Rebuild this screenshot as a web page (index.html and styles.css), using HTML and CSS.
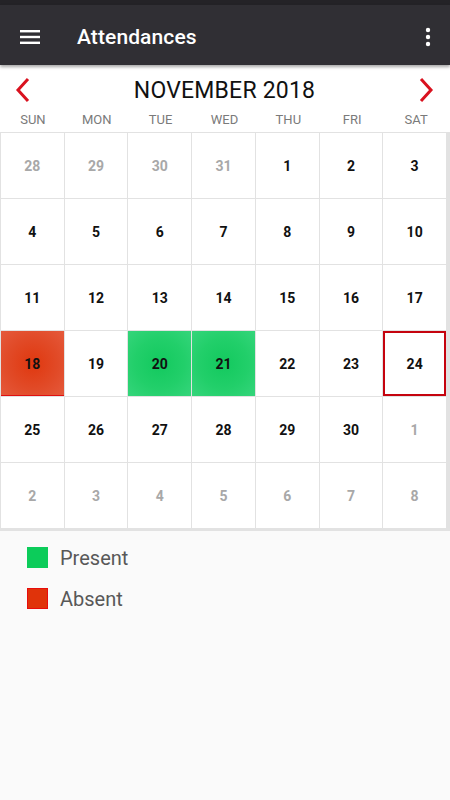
FILE: index.html
```html
<!DOCTYPE html>
<html>
<head>
<meta charset="utf-8">
<link rel="stylesheet" href="styles.css">
</head>
<body>
<div class="statusbar"></div>
<header class="toolbar">
  <svg class="menu" width="20" height="16" viewBox="0 0 20 16"><rect x="0" y="1" width="20" height="2.4" fill="#fff"/><rect x="0" y="6.8" width="20" height="2.4" fill="#fff"/><rect x="0" y="12.6" width="20" height="2.4" fill="#fff"/></svg>
  <h1 class="title">Attendances</h1>
  <svg class="kebab" width="6" height="20" viewBox="0 0 6 20"><circle cx="3" cy="3" r="2.2" fill="#fff"/><circle cx="3" cy="10" r="2.2" fill="#fff"/><circle cx="3" cy="17" r="2.2" fill="#fff"/></svg>
</header>
<section class="calendar">
  <div class="month-row">
    <svg class="arrow" width="16" height="26" viewBox="0 0 16 26"><path d="M13 2 L3 13 L13 24" fill="none" stroke="#d9121f" stroke-width="3"/></svg>
    <div class="month">NOVEMBER 2018</div>
    <svg class="arrow" width="16" height="26" viewBox="0 0 16 26"><path d="M3 2 L13 13 L3 24" fill="none" stroke="#d9121f" stroke-width="3"/></svg>
  </div>
  <div class="weekdays">
    <span>SUN</span><span>MON</span><span>TUE</span><span>WED</span><span>THU</span><span>FRI</span><span>SAT</span>
  </div>
  <div class="grid">
    <div class="cell muted">28</div><div class="cell muted">29</div><div class="cell muted">30</div><div class="cell muted">31</div><div class="cell">1</div><div class="cell">2</div><div class="cell">3</div>
    <div class="cell">4</div><div class="cell">5</div><div class="cell">6</div><div class="cell">7</div><div class="cell">8</div><div class="cell">9</div><div class="cell">10</div>
    <div class="cell">11</div><div class="cell">12</div><div class="cell">13</div><div class="cell">14</div><div class="cell">15</div><div class="cell">16</div><div class="cell">17</div>
    <div class="cell absent">18</div><div class="cell">19</div><div class="cell present">20</div><div class="cell present">21</div><div class="cell">22</div><div class="cell">23</div><div class="cell today">24</div>
    <div class="cell">25</div><div class="cell">26</div><div class="cell">27</div><div class="cell">28</div><div class="cell">29</div><div class="cell">30</div><div class="cell muted">1</div>
    <div class="cell muted">2</div><div class="cell muted">3</div><div class="cell muted">4</div><div class="cell muted">5</div><div class="cell muted">6</div><div class="cell muted">7</div><div class="cell muted">8</div>
  </div>
</section>
<ul class="legend">
  <li><span class="swatch swatch-present"></span>Present</li>
  <li><span class="swatch swatch-absent"></span>Absent</li>
</ul>
</body>
</html>
```
FILE: styles.css
```css
html, body {
  margin: 0;
  padding: 0;
  background: #fafafa;
  font-family: Roboto, "Liberation Sans", sans-serif;
  width: 450px;
  height: 800px;
  overflow: hidden;
}
.statusbar {
  height: 5px;
  background: #242327;
}
.toolbar {
  height: 60px;
  box-sizing: border-box;
  padding: 3px 20px 0;
  background: #302f34;
  display: flex;
  align-items: center;
  box-shadow: 0 2px 3px rgba(0,0,0,0.35);
  position: relative;
  z-index: 1;
}
.menu {
  display: block;
}
.title {
  margin: 0 0 0 37px;
  font-size: 21px;
  font-weight: 500;
  color: #fff;
  flex: 1;
  letter-spacing: 0.1px;
}
.kebab {
  display: block;
  margin-right: -1px;
}
.calendar {
  background: #fff;
}
.month-row {
  height: 47px;
  padding: 1px 16px 0 15px;
  display: flex;
  align-items: center;
  justify-content: space-between;
}
.arrow {
  display: block;
}
.month {
  font-size: 23px;
  color: #111;
  letter-spacing: 0.2px;
  padding-top: 1px;
}
.weekdays {
  display: grid;
  grid-template-columns: repeat(7, 1fr);
  padding: 0 2px 0 1px;
  height: 19px;
  font-size: 13px;
  color: #7a7a7a;
  text-align: center;
  line-height: 13px;
}
.grid {
  display: grid;
  grid-template-columns: repeat(7, 1fr);
  grid-auto-rows: 65px;
  gap: 1px;
  background: #e2e2e2;
  padding: 1px 4px 3px 1px;
}
.cell {
  background: #fff;
  display: flex;
  align-items: center;
  justify-content: center;
  font-size: 14px;
  font-weight: 700;
  color: #111;
}
.cell.muted {
  color: #a8a8a8;
}
.cell.absent {
  background: radial-gradient(circle at center, #e0380f 0%, #e14a27 55%, #e55a3c 100%);
  box-shadow: inset 0 -1px 0 #e01010;
}
.cell.present {
  background: radial-gradient(circle at center, #13c95e 0%, #22cf6a 55%, #35d57b 100%);
}
.cell.today {
  box-shadow: inset 0 0 0 2px #c5030e;
}
.legend {
  list-style: none;
  margin: 0;
  padding: 6px 0 0 27px;
}
.legend li {
  display: flex;
  align-items: center;
  height: 41px;
  font-size: 20px;
  color: #585858;
}
.swatch {
  width: 21px;
  height: 21px;
  margin-right: 12px;
  box-sizing: border-box;
}
.swatch-present {
  background: #0ccc5a;
}
.swatch-absent {
  background: #e0330a;
  border: 1px solid #e80c0c;
}
```
